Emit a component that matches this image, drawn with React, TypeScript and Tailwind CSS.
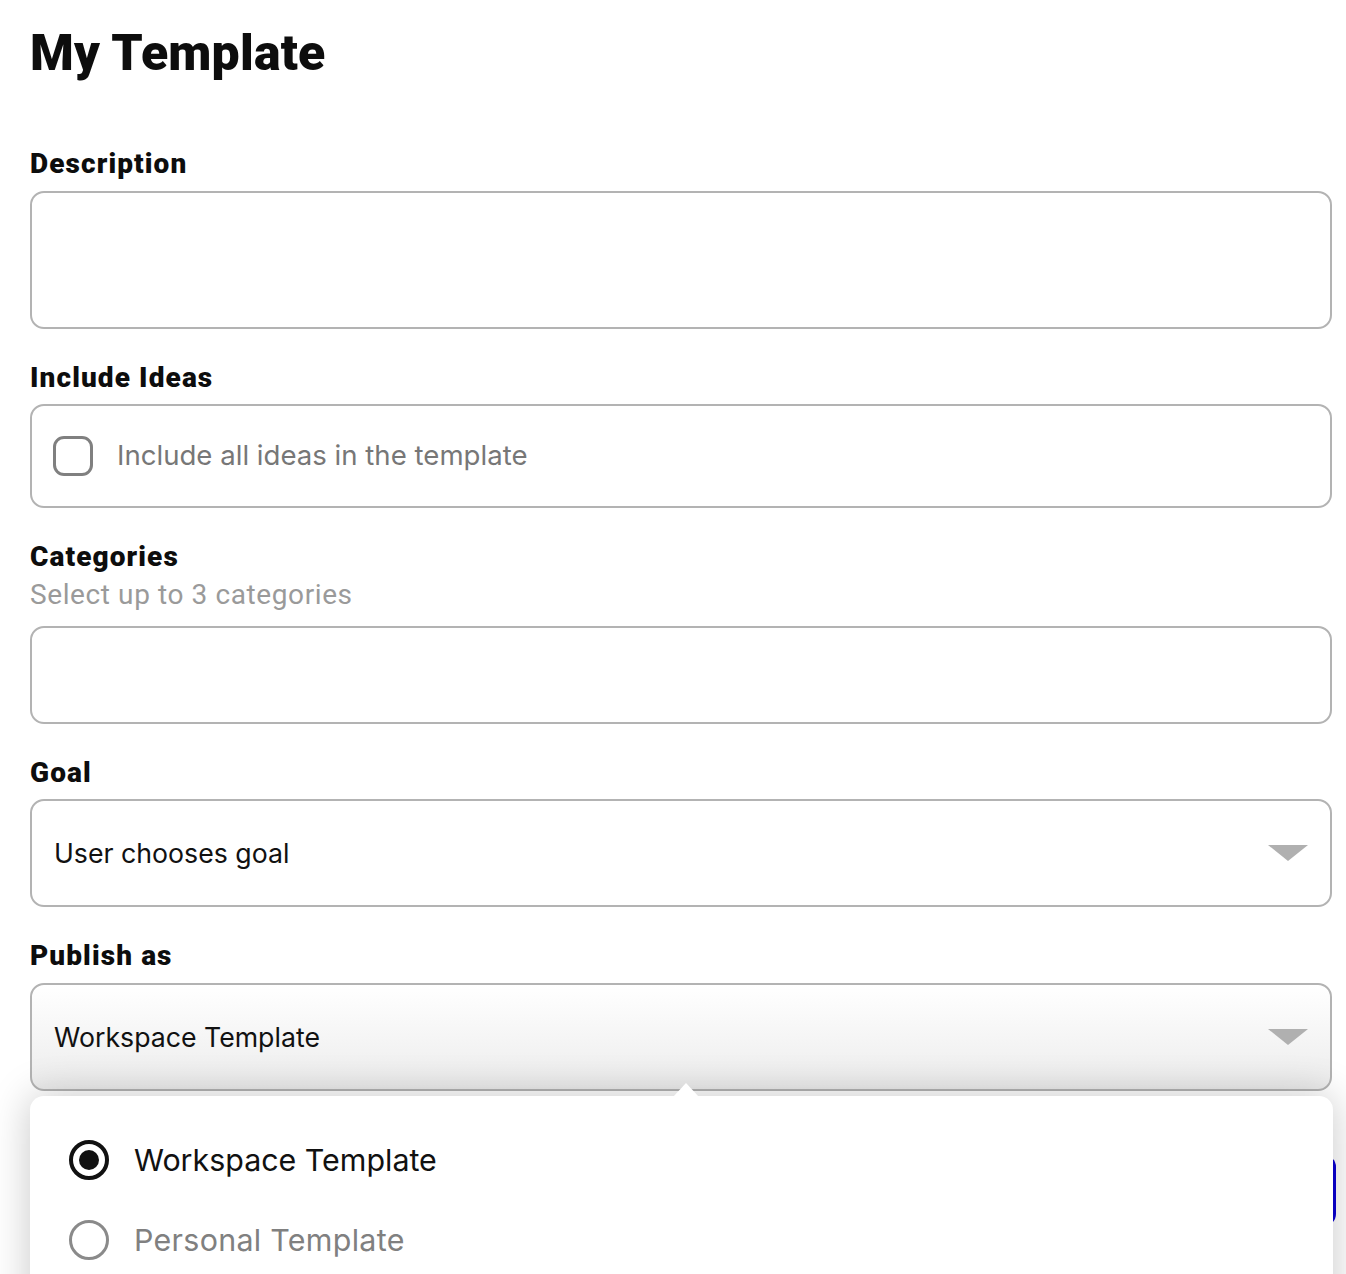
import React from "react";

const heading = "font-['Roboto','Liberation_Sans',sans-serif]";
const body = "font-['Inter','Liberation_Sans',sans-serif]";

function Label({ children }: { children: React.ReactNode }) {
  return (
    <div className={`${heading} text-[28px] leading-[32px] font-black tracking-[1.1px] text-[#0d0d0d]`}>
      {children}
    </div>
  );
}

function Caret() {
  return (
    <svg width="40" height="16" viewBox="0 0 40 16" className="shrink-0">
      <polygon points="0,0 40,0 20,16" fill="#b0b0b0" />
    </svg>
  );
}

function SelectBox({ value, shaded }: { value: string; shaded?: boolean }) {
  return (
    <div
      className={`flex h-[108px] items-center justify-between rounded-[14px] border-2 border-[#b3b3b3] pl-[22px] pr-[22px] ${
        shaded ? "bg-gradient-to-b from-white to-[#ececec]" : "bg-white"
      }`}
    >
      <span className={`${body} text-[26.7px] text-[#111]`}>{value}</span>
      <Caret />
    </div>
  );
}

export default function App() {
  return (
    <div className="relative h-[1274px] w-full overflow-hidden bg-white">
      <div className="pl-[30px] pr-[14px] pt-[23px]">
        <h1 className={`${heading} text-[50px] leading-[60px] font-black tracking-[0.2px] text-[#0d0d0d]`}>
          My Template
        </h1>

        <div className="mt-[65px]">
          <Label>Description</Label>
          <div className="mt-[11px] h-[138px] rounded-[14px] border-2 border-[#b3b3b3]" />
        </div>

        <div className="mt-[33px]">
          <Label>Include Ideas</Label>
          <div className="mt-[10px] flex h-[104px] items-center gap-[24px] rounded-[14px] border-2 border-[#b3b3b3] pl-[21px]">
            <div className="h-[40px] w-[40px] rounded-[11px] border-[3px] border-[#808080]" />
            <span className={`${body} text-[27.6px] text-[#777]`}>Include all ideas in the template</span>
          </div>
        </div>

        <div className="mt-[33px]">
          <Label>Categories</Label>
          <div className={`${heading} mt-[6px] text-[28px] leading-[32px] tracking-[0.6px] text-[#9a9a9a]`}>
            Select up to 3 categories
          </div>
          <div className="mt-[15px] h-[98px] rounded-[14px] border-2 border-[#b3b3b3]" />
        </div>

        <div className="mt-[33px]">
          <Label>Goal</Label>
          <div className="mt-[10px]">
            <SelectBox value="User chooses goal" />
          </div>
        </div>

        <div className="mt-[33px]">
          <Label>Publish as</Label>
          <div className="mt-[11px]">
            <SelectBox value="Workspace Template" shaded />
          </div>
        </div>
      </div>

      {/* button hidden behind the popover */}
      <div className="absolute left-[1180px] top-[1155px] h-[71px] w-[156px] rounded-[12px] bg-[#0a00d4]" />

      {/* popover */}
      <div className="absolute left-[30px] top-[1096px] h-[300px] w-[1303px] rounded-[14px] bg-white pl-[39px] pt-[44px] shadow-[0_0_40px_rgba(0,0,0,0.22)]">
        <svg
          width="26"
          height="14"
          viewBox="0 0 26 14"
          className="absolute left-[643px] top-[-13px]"
        >
          <polygon points="0,14 13,0 26,14" fill="#ffffff" />
        </svg>
        <div className="flex flex-col gap-[40px]">
          <div className="flex items-center gap-[25px]">
            <div className="flex h-[40px] w-[40px] items-center justify-center rounded-full border-[4px] border-[#111]">
              <div className="h-[20px] w-[20px] rounded-full bg-[#111]" />
            </div>
            <span className={`${body} text-[30.4px] leading-[40px] text-[#111]`}>Workspace Template</span>
          </div>
          <div className="flex items-center gap-[25px]">
            <div className="h-[40px] w-[40px] rounded-full border-[3px] border-[#8a8a8a]" />
            <span className={`${body} text-[30.4px] leading-[40px] tracking-[0.3px] text-[#808080]`}>
              Personal Template
            </span>
          </div>
        </div>
      </div>
    </div>
  );
}
